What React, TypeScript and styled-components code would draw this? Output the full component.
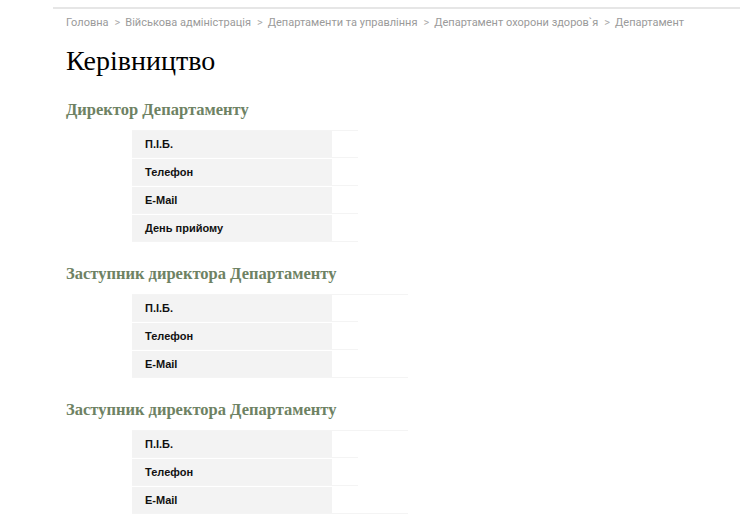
import React from "react";
import styled, { createGlobalStyle } from "styled-components";

const GlobalStyle = createGlobalStyle`
  body {
    margin: 0;
    background: #ffffff;
    font-family: "Liberation Sans", Arial, sans-serif;
  }
`;

interface ISection {
  title: string;
  rows: string[];
  wide?: boolean;
}

const crumbs = [
  "Головна",
  "Військова адміністрація",
  "Департаменти та управління",
  "Департамент охорони здоров`я",
  "Департамент",
];

const sections: ISection[] = [
  { title: "Директор Департаменту", rows: ["П.І.Б.", "Телефон", "E-Mail", "День прийому"] },
  { title: "Заступник директора Департаменту", rows: ["П.І.Б.", "Телефон", "E-Mail"], wide: true },
  { title: "Заступник директора Департаменту", rows: ["П.І.Б.", "Телефон", "E-Mail"], wide: true },
];

const App = () => {
  return (
    <Page>
      <GlobalStyle />
      <Breadcrumbs>
        {crumbs.map((c, i) => (
          <Crumb key={i}>
            {i > 0 && <Sep>&gt;</Sep>}
            {c}
          </Crumb>
        ))}
      </Breadcrumbs>
      <Content>
        <Title>Керівництво</Title>
        {sections.map((s, i) => (
          <Section key={i}>
            <SectionTitle>{s.title}</SectionTitle>
            <InfoTable wide={s.wide}>
              {s.rows.map(r => (
                <Row key={r}>
                  <Label>{r}</Label>
                  <Value />
                </Row>
              ))}
            </InfoTable>
          </Section>
        ))}
      </Content>
    </Page>
  );
};

export default App;

const Page = styled.div`
  margin: 7px 0 0 53px;
  border-top: 2px solid #e6e6e6;
`;

const Breadcrumbs = styled.div`
  display: flex;
  padding: 6px 0 0 13px;
  font-family: Roboto, "Liberation Sans", sans-serif;
  font-size: 11px;
  line-height: 16px;
  color: #9a9a9a;
  white-space: nowrap;
`;

const Crumb = styled.span`
  margin-right: 6px;
`;

const Sep = styled.span`
  margin-right: 5px;
  color: #aaaaaa;
`;

const Content = styled.div`
  padding-left: 13px;
`;

const Title = styled.h1`
  margin: 13px 0 0;
  font-family: "Liberation Serif", "Times New Roman", serif;
  font-weight: normal;
  font-size: 28px;
  line-height: 34px;
  color: #000000;
`;

const Section = styled.div`
  margin-top: 21px;
  & + & {
    margin-top: 21px;
  }
`;

const SectionTitle = styled.h3`
  margin: 0 0 9px;
  font-family: "Liberation Serif", "Times New Roman", serif;
  font-weight: bold;
  font-size: 16.5px;
  line-height: 22px;
  color: #6e8263;
`;

const InfoTable = styled.div<{ wide?: boolean }>`
  margin-left: 66px;
  width: ${p => (p.wide ? 276 : 226)}px;
  border-top: 1px solid #f4f4f4;
  border-bottom: 1px solid #f4f4f4;
`;

const Row = styled.div`
  display: flex;
  width: 226px;
  height: 26px;
  border-bottom: 1px solid #f4f4f4;
  &:last-child {
    border-bottom: none;
  }
  & + & {
    margin-top: 1px;
  }
`;

const Label = styled.div`
  display: flex;
  align-items: center;
  width: 200px;
  box-sizing: border-box;
  padding-left: 13px;
  background: #f3f3f3;
  font-size: 11px;
  font-weight: bold;
  color: #111111;
`;

const Value = styled.div`
  flex: 1;
`;
